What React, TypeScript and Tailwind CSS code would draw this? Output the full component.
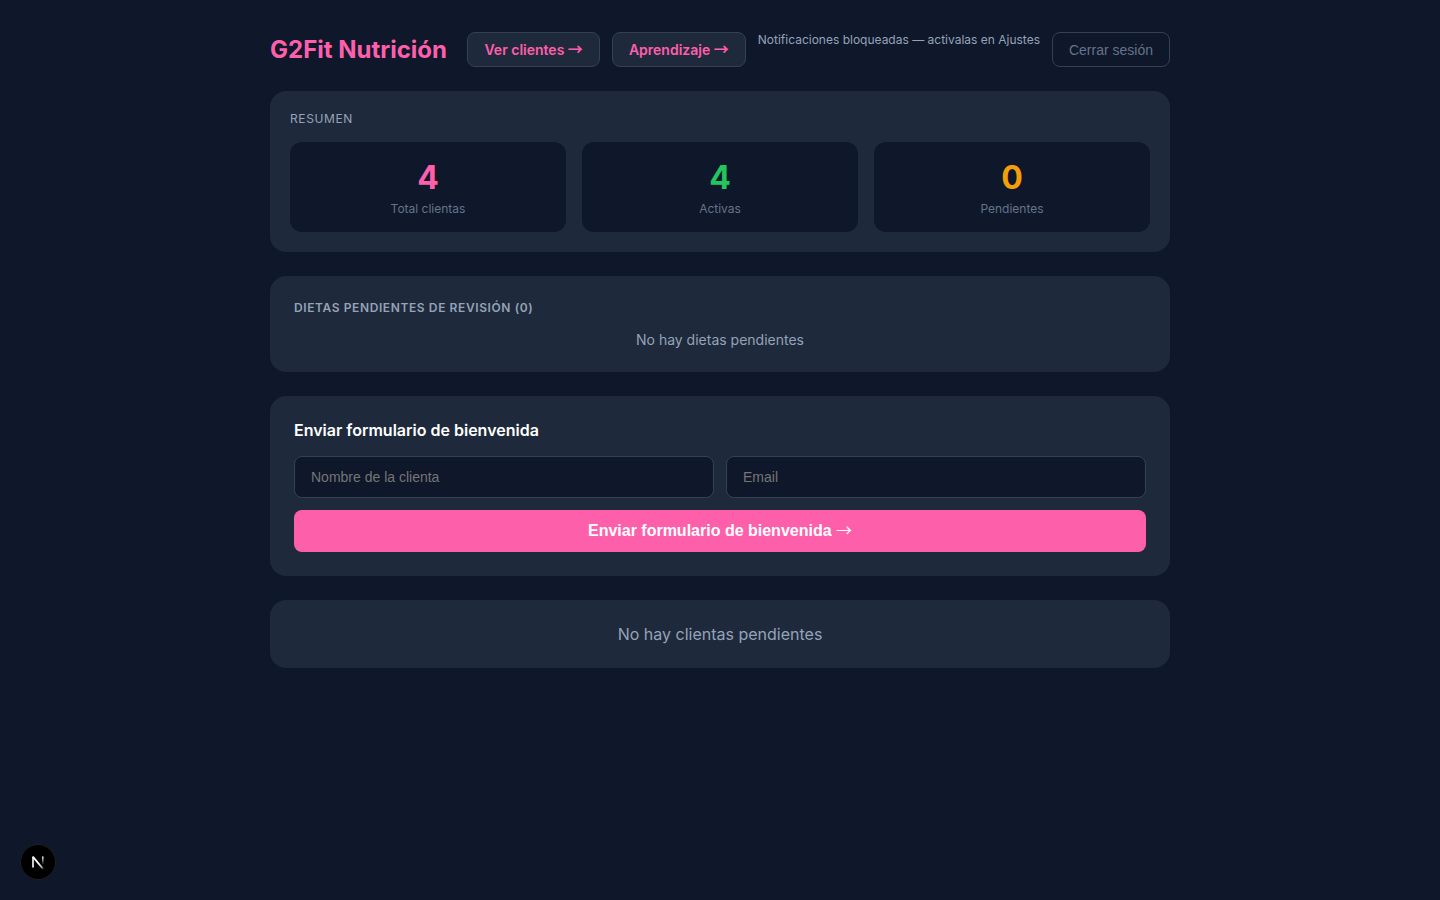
import React from "react";

const stats = [
  { value: 4, label: "Total clientas", color: "text-[#fe5fab]" },
  { value: 4, label: "Activas", color: "text-[#22c55e]" },
  { value: 0, label: "Pendientes", color: "text-[#f59e0b]" },
];

function NavLink({ href, children }: { href: string; children: React.ReactNode }) {
  return (
    <a
      href={href}
      className="rounded-lg border border-[#334155] bg-[#1e293b] px-4 py-2 text-sm leading-[17px] font-semibold text-[#fe5fab]"
    >
      {children} <span className="font-['Noto_Sans_CJK_JP',sans-serif] text-[15px] leading-0">→</span>
    </a>
  );
}

function Field({ id, type, label }: { id: string; type: string; label: string }) {
  return (
    <input
      id={id}
      type={type}
      aria-label={label}
      placeholder={label}
      className="block min-w-0 flex-1 rounded-lg border border-[#334155] bg-[#0f172a] px-4 py-3 font-['Liberation_Sans',sans-serif] text-sm leading-4 text-white placeholder:text-[#757575]"
    />
  );
}

function DevBadge() {
  return (
    <button
      type="button"
      aria-label="Dev Tools"
      className="fixed bottom-5 left-5 flex size-9 items-center justify-center rounded-full border border-[#1f2023] bg-black"
    >
      <svg width="14" height="14" viewBox="0 0 14 14" fill="none" aria-hidden="true">
        <defs>
          <linearGradient id="diag" x1="8" y1="8" x2="13" y2="14" gradientUnits="userSpaceOnUse">
            <stop stopColor="#fff" />
            <stop offset="0.6" stopColor="#fff" stopOpacity="0.7" />
            <stop offset="1" stopColor="#fff" stopOpacity="0.1" />
          </linearGradient>
          <linearGradient id="stem" x1="12" y1="1" x2="12" y2="10" gradientUnits="userSpaceOnUse">
            <stop stopColor="#fff" />
            <stop offset="1" stopColor="#fff" stopOpacity="0" />
          </linearGradient>
        </defs>
        <path d="M2 12.5V1.5" stroke="#fff" strokeWidth="1.6" />
        <path d="M2 1.8L12.2 14" stroke="url(#diag)" strokeWidth="1.8" />
        <rect x="11" y="1.5" width="1.6" height="8.5" fill="url(#stem)" />
      </svg>
    </button>
  );
}

export default function App() {
  return (
    <div className="min-h-screen bg-[#0f172a] px-6 py-8 font-[Inter,sans-serif] text-white">
      <main className="mx-auto flex max-w-[900px] flex-col gap-6">
        <header className="flex flex-wrap items-center justify-between gap-3">
          <h1 className="text-2xl leading-[29px] font-bold text-[#fe5fab]">G2Fit Nutrición</h1>
          <nav className="flex flex-wrap gap-3">
            <NavLink href="#clientes">Ver clientes</NavLink>
            <NavLink href="#aprendizaje">Aprendizaje</NavLink>
            <span className="text-xs leading-[15px] text-[#94a3b8]">
              Notificaciones bloqueadas — activalas en Ajustes
            </span>
            <button
              type="button"
              className="rounded-lg border border-[#334155] px-4 py-2 font-['Liberation_Sans',sans-serif] text-sm leading-4 text-[#64748b]"
            >
              Cerrar sesión
            </button>
          </nav>
        </header>

        <section className="rounded-2xl bg-[#1e293b] p-5">
          <h2 className="mb-4 text-xs leading-[15px] tracking-wider text-[#94a3b8]">RESUMEN</h2>
          <div className="grid grid-cols-3 gap-4">
            {stats.map((s) => (
              <div key={s.label} className="rounded-xl bg-[#0f172a] p-4 text-center">
                <p className={`text-[32px] leading-[39px] font-bold ${s.color}`}>{s.value}</p>
                <p className="mt-1 text-xs leading-[15px] text-[#64748b]">{s.label}</p>
              </div>
            ))}
          </div>
        </section>

        <section className="rounded-2xl bg-[#1e293b] p-6">
          <h2 className="mb-4 text-xs leading-[15px] font-semibold tracking-wider text-[#94a3b8]">
            DIETAS PENDIENTES DE REVISIÓN (0)
          </h2>
          <p className="text-center text-sm leading-[17px] text-[#94a3b8]">No hay dietas pendientes</p>
        </section>

        <section className="rounded-2xl bg-[#1e293b] p-6">
          <h2 className="mb-4 text-base leading-5 font-semibold">Enviar formulario de bienvenida</h2>
          <form className="flex flex-col gap-3" onSubmit={(e) => e.preventDefault()}>
            <div className="flex gap-3">
              <Field id="nombre" type="text" label="Nombre de la clienta" />
              <Field id="email" type="email" label="Email" />
            </div>
            <button
              type="submit"
              className="rounded-lg bg-[#fe5fab] py-3 font-['Liberation_Sans',sans-serif] text-base leading-[18px] font-bold text-white"
            >
              Enviar formulario de bienvenida{" "}
              <span className="font-['Noto_Sans_CJK_JP',sans-serif] leading-0 font-normal">→</span>
            </button>
          </form>
        </section>

        <section className="rounded-2xl bg-[#1e293b] p-6 text-center text-base leading-5 text-[#94a3b8]">
          No hay clientas pendientes
        </section>
      </main>
      <DevBadge />
    </div>
  );
}
